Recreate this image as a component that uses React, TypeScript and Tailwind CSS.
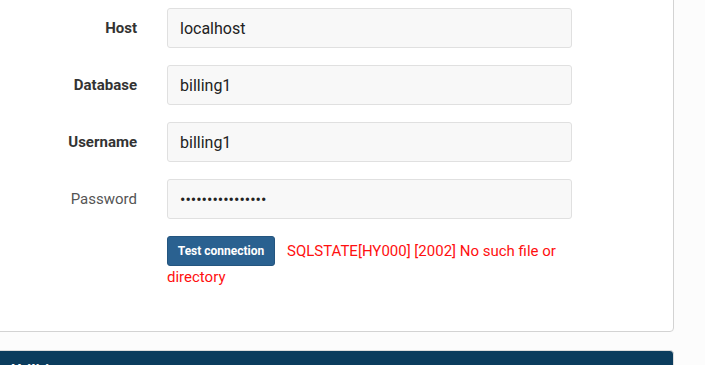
const fields = [
  { label: "Host", value: "localhost", bold: true, type: "text" },
  { label: "Database", value: "billing1", bold: true, type: "text" },
  { label: "Username", value: "billing1", bold: true, type: "text" },
  { label: "Password", value: "secretpassword12", bold: false, type: "password" },
];

export default function App() {
  return (
    <div
      className="w-[705px] h-[365px] overflow-hidden bg-[#fcfcfc]"
      style={{ fontFamily: "Roboto, 'Liberation Sans', sans-serif" }}
    >
      <div className="-ml-[20px] -mt-[20px] w-[694px]">
        {/* database settings card */}
        <div className="bg-white border border-[#d3d3d3] rounded-[4px] pt-[27px] pb-[44px]">
          <div className="flex flex-col gap-[17px]">
            {fields.map((f) => (
              <div key={f.label} className="flex items-center">
                <label
                  className={
                    f.bold
                      ? "w-[156px] text-right text-[15px] font-bold text-[#333]"
                      : "w-[156px] text-right text-[15px] text-[#555]"
                  }
                >
                  {f.label}
                </label>
                <input
                  readOnly
                  type={f.type}
                  value={f.value}
                  className="ml-[30px] w-[405px] h-[40px] px-[12px] bg-[#f8f8f8] border border-[#e0e0e0] rounded-[3px] text-[16px] text-[#222] outline-none"
                />
              </div>
            ))}

            {/* test connection */}
            <div className="flex">
              <div className="w-[156px]" />
              <div className="ml-[30px] w-[405px] text-[15px] leading-[20px] text-[#ff1010]">
                <button className="inline-block align-middle h-[30px] w-[108px] bg-[#2a6190] border border-[#24557f] rounded-[3px] text-[12px] font-bold text-white mr-[12px]">
                  Test connection
                </button>
                <span className="align-middle">
                  SQLSTATE[HY000] [2002] No such file or directory
                </span>
              </div>
            </div>
          </div>
        </div>

        {/* next panel */}
        <div className="mt-[18px] border border-[#dcdcdc] rounded-t-[4px] bg-[#0b3c5d] h-[40px] pl-[30px] pt-[12px] text-[16px] leading-none font-bold text-white">
          Utilities
        </div>
      </div>
    </div>
  );
}
